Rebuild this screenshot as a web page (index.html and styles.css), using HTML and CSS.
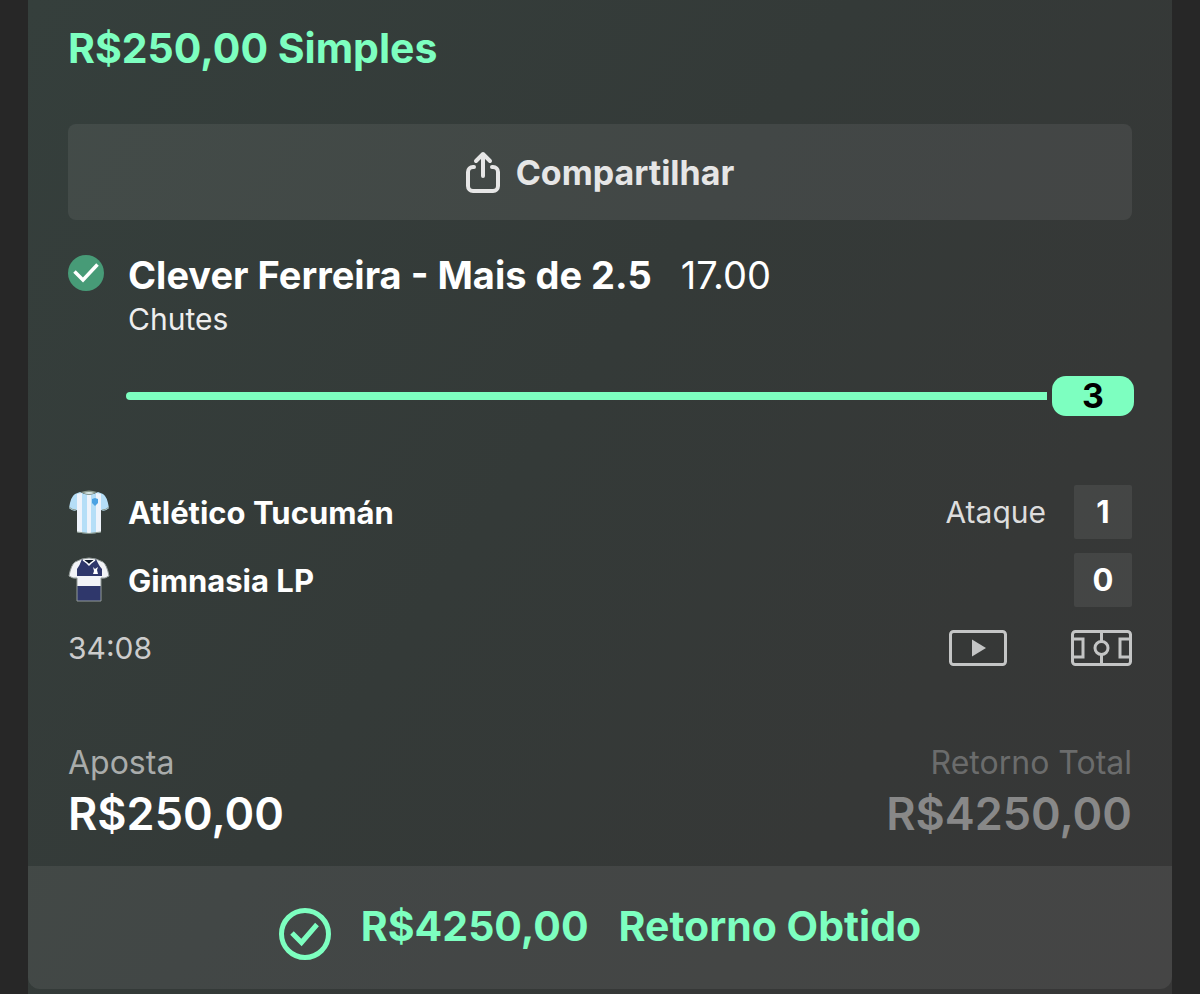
FILE: index.html
```html
<!DOCTYPE html>
<html lang="pt-br">
<head>
  <meta charset="UTF-8">
  <meta name="viewport" content="width=device-width, initial-scale=1.0">
  <title>Minhas Apostas</title>
  <link rel="stylesheet" href="styles.css">
</head>
<body>
  <main class="bilhete">
    <div class="conteudo">
      <h1 class="titulo">R$250,00 Simples</h1>

      <button class="compartilhar" type="button">
        <svg class="icone-compartilhar" viewBox="0 0 34 42" fill="none" stroke="currentColor" stroke-width="4" stroke-linecap="round" stroke-linejoin="round">
          <path d="M8 16H7a5 5 0 0 0-5 5v14a5 5 0 0 0 5 5h20a5 5 0 0 0 5-5V21a5 5 0 0 0-5-5h-1"/>
          <path d="M17 25V3M10 10l7-7 7 7"/>
        </svg>
        Compartilhar
      </button>

      <!-- Seleção -->
      <section class="selecao">
        <svg class="icone-ganhou" viewBox="0 0 36 36">
          <circle cx="18" cy="18" r="18" fill="#479b77"/>
          <path d="M6.500 16.500l8.500 8.500L29.500 9.500" fill="none" stroke="#fff" stroke-width="3.500"/>
        </svg>
        <div class="selecao-texto">
          <h2 class="selecao-nome">Clever Ferreira - Mais de 2.5 <span class="odd">17.00</span></h2>
          <p class="mercado">Chutes</p>
        </div>
      </section>

      <div class="progresso">
        <div class="barra"></div>
        <span class="valor">3</span>
      </div>

      <!-- Partida -->
      <section class="partida">
        <div class="time">
          <svg class="camisa" viewBox="0 0 42 46">
            <path d="M12 3Q21 8 30 3L35 5Q39 7 41 19Q37 23 33 21V43Q21 46 9 43V21Q5 23 1 19Q3 7 7 5Z" fill="#b5def7"/>
            <path d="M9 5l5-1v40l-5-1zM19 6h4v38h-4zM28 4l5 1v38l-5 1z" fill="#eef3fb"/>
            <path d="M13 3Q21 0 29 3Q21 9 13 3Z" fill="#8c9a8e"/>
            <path d="M16 4Q21 2 26 4Q21 6 16 4Z" fill="#d9e7e8"/>
            <path d="M24 10l3-1 3 1v4l-3 3-3-3z" fill="#4ba2e3"/>
            <path d="M1 18q3 3 7 3M41 18q-3 3-7 3M9 43q12 3 24 0" fill="none" stroke="#8c9a8e"/>
          </svg>
          <span class="time-nome">Atlético Tucumán</span>
          <span class="evento">Ataque</span>
          <span class="gols">1</span>
        </div>
        <div class="time">
          <svg class="camisa" viewBox="0 0 42 46">
            <path d="M14 2Q21 0 28 2L35 5Q39 8 41 19Q37 22 33 21V44H9V21Q5 22 1 19Q3 8 7 5Z" fill="#f2f3f7"/>
            <path d="M14 2L21 7 28 2Q31 9 34 12V19H9V12Q12 8 14 2ZM9 29H33V44H9Z" fill="#2f376b"/>
            <path d="M16 3h10l-5 4z" fill="#111a2d"/>
            <path d="M15 3l4 3 2 2 2-2 4-3" fill="none" stroke="#fff" stroke-width="1.500"/>
            <path d="M25 10l2 2 3-2-1 3 1 4h-5l1-3z" fill="#fff"/>
            <path d="M14 2Q21 0 28 2L35 5Q39 8 41 19Q37 22 33 21V44H9V21Q5 22 1 19Q3 8 7 5Z" fill="none" stroke="#929a98"/>
          </svg>
          <span class="time-nome">Gimnasia LP</span>
          <span class="gols">0</span>
        </div>
        <div class="relogio">
          <span class="tempo">34:08</span>
          <button class="botao-icone" type="button" aria-label="Vídeo">
            <svg width="58" height="36" viewBox="0 0 58 36">
              <rect x="1.500" y="1.500" width="55" height="33" rx="3" fill="none" stroke="currentColor" stroke-width="3"/>
              <path d="M23 9.500v17L37 18z" fill="currentColor"/>
            </svg>
          </button>
          <button class="botao-icone" type="button" aria-label="Campo">
            <svg width="61" height="36" viewBox="0 0 61 36" fill="none" stroke="currentColor" stroke-width="3">
              <rect x="1.500" y="1.500" width="58" height="33" rx="3"/>
              <path d="M30.500 2v9.500M30.500 24.500V34M2 9h10v18H2M59 9H49v18h10"/>
              <circle cx="30.500" cy="18" r="6.500"/>
            </svg>
          </button>
        </div>
      </section>

      <!-- Valores -->
      <dl class="valores">
        <div>
          <dt>Aposta</dt>
          <dd>R$250,00</dd>
        </div>
        <div class="retorno">
          <dt>Retorno Total</dt>
          <dd>R$4250,00</dd>
        </div>
      </dl>
    </div>

    <footer class="obtido">
      <svg class="icone-obtido" viewBox="0 0 52 52" fill="none" stroke="currentColor">
        <circle cx="26" cy="26" r="23.500" stroke-width="5"/>
        <path d="M13 25l9.500 9.500L38 16.500" stroke-width="5"/>
      </svg>
      <span>R$4250,00</span>
      <span>Retorno Obtido</span>
    </footer>
  </main>
</body>
</html>
```
FILE: styles.css
```css
* {
  box-sizing: border-box;
}

body {
  margin: 0;
  padding: 0 28px;
  background: #272727;
  color: #fff;
  font-family: Inter, "Liberation Sans", sans-serif;
}

h1, h2, p, dl, dd {
  margin: 0;
}

button {
  border: none;
  font-family: inherit;
  cursor: pointer;
}

svg {
  display: block;
  flex-shrink: 0;
}

.bilhete {
  padding-bottom: 5px;
  background: linear-gradient(125deg, #353f3c 0%, #343a38 45%, #363837 75%, #373737 100%);
}

.conteudo {
  padding: 20px 40px 22px;
}

.titulo {
  color: #7dffc0;
  font-size: 41px;
  font-weight: 700;
  line-height: 56px;
}

.compartilhar {
  display: flex;
  align-items: center;
  justify-content: center;
  gap: 16px;
  width: 100%;
  height: 96px;
  margin-top: 48px;
  border-radius: 8px;
  background: rgba(255, 255, 255, 0.07);
  color: #e6e6e6;
  font-size: 34px;
  font-weight: 700;
}

.icone-compartilhar {
  width: 34px;
  height: 42px;
}

/* Seleção */
.selecao {
  display: flex;
  gap: 24px;
  margin-top: 31px;
}

.icone-ganhou {
  width: 36px;
  height: 36px;
  margin-top: 4px;
}

.selecao-nome {
  font-size: 38px;
  font-weight: 700;
  line-height: 48px;
}

.odd {
  margin-left: 20px;
  font-weight: 400;
}

.mercado {
  color: #eee;
  font-size: 30px;
  line-height: 40px;
}

.progresso {
  display: flex;
  align-items: center;
  margin: 37px -2px 0 58px;
}

.barra {
  flex: 1;
  height: 8px;
  margin-right: 5px;
  border-radius: 4px 0 0 4px;
  background: #7dffc0;
}

.valor {
  width: 82px;
  border-radius: 14px;
  background: #7dffc0;
  color: #000;
  font-size: 34px;
  font-weight: 700;
  line-height: 40px;
  text-align: center;
}

/* Partida */
.partida {
  display: grid;
  gap: 14px;
  margin-top: 69px;
}

.time {
  display: flex;
  align-items: center;
  height: 54px;
  font-size: 30px;
}

.camisa {
  width: 42px;
  height: 46px;
}

.time-nome {
  flex: 1;
  margin-left: 18px;
  font-size: 31px;
  font-weight: 700;
}

.evento {
  margin-right: 28px;
  color: #ddd;
}

.gols {
  width: 58px;
  border-radius: 2px;
  background: rgba(255, 255, 255, 0.07);
  font-size: 31px;
  font-weight: 700;
  line-height: 54px;
  text-align: center;
}

.relogio {
  display: flex;
  align-items: center;
  gap: 64px;
  height: 54px;
}

.tempo {
  flex: 1;
  color: #ccc;
  font-size: 30px;
}

.botao-icone {
  padding: 0;
  background: none;
  color: #c4c5c5;
}

/* Valores */
.valores {
  display: flex;
  justify-content: space-between;
  margin-top: 67px;
}

.valores dt {
  color: #a9acab;
  font-size: 32px;
  line-height: 42px;
}

.valores dd {
  font-size: 45px;
  font-weight: 600;
  line-height: 60px;
}

.retorno {
  text-align: right;
}

.retorno dt {
  color: #6b6c6c;
}

.retorno dd {
  color: #888;
}

.obtido {
  display: flex;
  align-items: flex-start;
  justify-content: center;
  gap: 30px;
  height: 123px;
  padding-top: 36px;
  border-radius: 0 0 12px 12px;
  background: rgba(255, 255, 255, 0.07);
  color: #7dffc0;
  font-size: 41px;
  font-weight: 700;
  line-height: 48px;
}

.icone-obtido {
  width: 52px;
  height: 52px;
  margin-top: 6px;
}
```
